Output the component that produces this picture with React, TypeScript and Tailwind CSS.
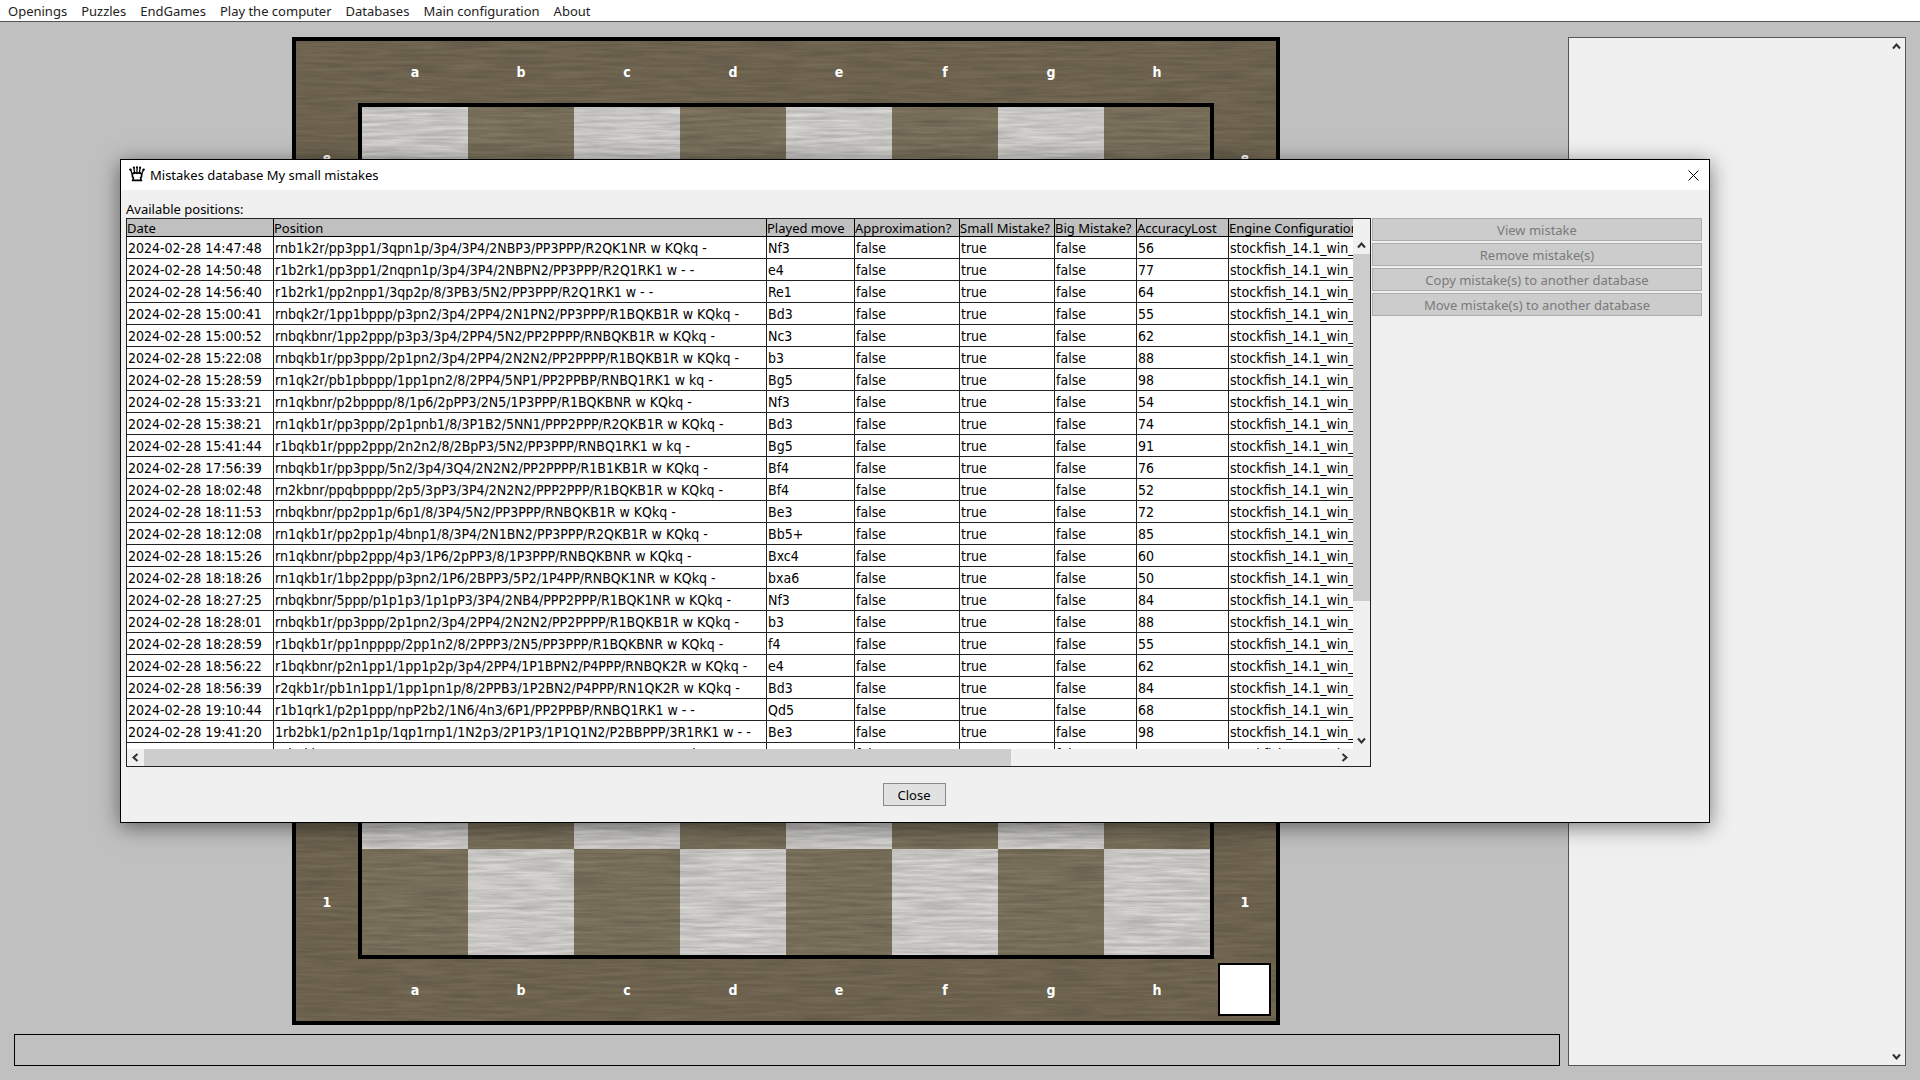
import React from 'react';

const menuItems = ['Openings', 'Puzzles', 'EndGames', 'Play the computer', 'Databases', 'Main configuration', 'About'];
const files = ['a', 'b', 'c', 'd', 'e', 'f', 'g', 'h'];
const ranks = [8, 7, 6, 5, 4, 3, 2, 1];
const actions = ['View mistake', 'Remove mistake(s)', 'Copy mistake(s) to another database', 'Move mistake(s) to another database'];

interface Mistake {
  date: string;
  position: string;
  move: string;
  lost: number;
}

const mistakes: Mistake[] = [
  { date: '2024-02-28 14:47:48', position: 'rnb1k2r/pp3pp1/3qpn1p/3p4/3P4/2NBP3/PP3PPP/R2QK1NR w KQkq -', move: 'Nf3', lost: 56 },
  { date: '2024-02-28 14:50:48', position: 'r1b2rk1/pp3pp1/2nqpn1p/3p4/3P4/2NBPN2/PP3PPP/R2Q1RK1 w - -', move: 'e4', lost: 77 },
  { date: '2024-02-28 14:56:40', position: 'r1b2rk1/pp2npp1/3qp2p/8/3PB3/5N2/PP3PPP/R2Q1RK1 w - -', move: 'Re1', lost: 64 },
  { date: '2024-02-28 15:00:41', position: 'rnbqk2r/1pp1bppp/p3pn2/3p4/2PP4/2N1PN2/PP3PPP/R1BQKB1R w KQkq -', move: 'Bd3', lost: 55 },
  { date: '2024-02-28 15:00:52', position: 'rnbqkbnr/1pp2ppp/p3p3/3p4/2PP4/5N2/PP2PPPP/RNBQKB1R w KQkq -', move: 'Nc3', lost: 62 },
  { date: '2024-02-28 15:22:08', position: 'rnbqkb1r/pp3ppp/2p1pn2/3p4/2PP4/2N2N2/PP2PPPP/R1BQKB1R w KQkq -', move: 'b3', lost: 88 },
  { date: '2024-02-28 15:28:59', position: 'rn1qk2r/pb1pbppp/1pp1pn2/8/2PP4/5NP1/PP2PPBP/RNBQ1RK1 w kq -', move: 'Bg5', lost: 98 },
  { date: '2024-02-28 15:33:21', position: 'rn1qkbnr/p2bpppp/8/1p6/2pPP3/2N5/1P3PPP/R1BQKBNR w KQkq -', move: 'Nf3', lost: 54 },
  { date: '2024-02-28 15:38:21', position: 'rn1qkb1r/pp3ppp/2p1pnb1/8/3P1B2/5NN1/PPP2PPP/R2QKB1R w KQkq -', move: 'Bd3', lost: 74 },
  { date: '2024-02-28 15:41:44', position: 'r1bqkb1r/ppp2ppp/2n2n2/8/2BpP3/5N2/PP3PPP/RNBQ1RK1 w kq -', move: 'Bg5', lost: 91 },
  { date: '2024-02-28 17:56:39', position: 'rnbqkb1r/pp3ppp/5n2/3p4/3Q4/2N2N2/PP2PPPP/R1B1KB1R w KQkq -', move: 'Bf4', lost: 76 },
  { date: '2024-02-28 18:02:48', position: 'rn2kbnr/ppqbpppp/2p5/3pP3/3P4/2N2N2/PPP2PPP/R1BQKB1R w KQkq -', move: 'Bf4', lost: 52 },
  { date: '2024-02-28 18:11:53', position: 'rnbqkbnr/pp2pp1p/6p1/8/3P4/5N2/PP3PPP/RNBQKB1R w KQkq -', move: 'Be3', lost: 72 },
  { date: '2024-02-28 18:12:08', position: 'rn1qkb1r/pp2pp1p/4bnp1/8/3P4/2N1BN2/PP3PPP/R2QKB1R w KQkq -', move: 'Bb5+', lost: 85 },
  { date: '2024-02-28 18:15:26', position: 'rn1qkbnr/pbp2ppp/4p3/1P6/2pPP3/8/1P3PPP/RNBQKBNR w KQkq -', move: 'Bxc4', lost: 60 },
  { date: '2024-02-28 18:18:26', position: 'rn1qkb1r/1bp2ppp/p3pn2/1P6/2BPP3/5P2/1P4PP/RNBQK1NR w KQkq -', move: 'bxa6', lost: 50 },
  { date: '2024-02-28 18:27:25', position: 'rnbqkbnr/5ppp/p1p1p3/1p1pP3/3P4/2NB4/PPP2PPP/R1BQK1NR w KQkq -', move: 'Nf3', lost: 84 },
  { date: '2024-02-28 18:28:01', position: 'rnbqkb1r/pp3ppp/2p1pn2/3p4/2PP4/2N2N2/PP2PPPP/R1BQKB1R w KQkq -', move: 'b3', lost: 88 },
  { date: '2024-02-28 18:28:59', position: 'r1bqkb1r/pp1npppp/2pp1n2/8/2PPP3/2N5/PP3PPP/R1BQKBNR w KQkq -', move: 'f4', lost: 55 },
  { date: '2024-02-28 18:56:22', position: 'r1bqkbnr/p2n1pp1/1pp1p2p/3p4/2PP4/1P1BPN2/P4PPP/RNBQK2R w KQkq -', move: 'e4', lost: 62 },
  { date: '2024-02-28 18:56:39', position: 'r2qkb1r/pb1n1pp1/1pp1pn1p/8/2PPB3/1P2BN2/P4PPP/RN1QK2R w KQkq -', move: 'Bd3', lost: 84 },
  { date: '2024-02-28 19:10:44', position: 'r1b1qrk1/p2p1ppp/npP2b2/1N6/4n3/6P1/PP2PPBP/RNBQ1RK1 w - -', move: 'Qd5', lost: 68 },
  { date: '2024-02-28 19:41:20', position: '1rb2bk1/p2n1p1p/1qp1rnp1/1N2p3/2P1P3/1P1Q1N2/P2BBPPP/3R1RK1 w - -', move: 'Be3', lost: 98 },
  { date: '2024-02-28 19:52:07', position: 'r1bqkb1r/pp3ppp/2n2n2/3p4/3P4/2N2N2/PP3PPP/R1BQKB1R w KQkq -', move: 'e4', lost: 57 },
];

const columns = [
  { title: 'Date', width: 'w-[147px]' },
  { title: 'Position', width: 'w-[493px]' },
  { title: 'Played move', width: 'w-[88px]' },
  { title: 'Approximation?', width: 'w-[105px]' },
  { title: 'Small Mistake?', width: 'w-[95px]' },
  { title: 'Big Mistake?', width: 'w-[82px]' },
  { title: 'AccuracyLost', width: 'w-[92px]' },
  { title: 'Engine Configuration', width: 'w-[300px]' },
];

const Chevron = ({ d }: { d: string }) => (
  <svg width="9" height="9" viewBox="0 0 9 9" fill="none" stroke="#303030" strokeWidth="2">
    <path d={d} />
  </svg>
);

const UP = 'M1 6.5 L4.5 2.5 L8 6.5';
const DOWN = 'M1 2.5 L4.5 6.5 L8 2.5';
const LEFT = 'M6.5 1 L2.5 4.5 L6.5 8';
const RIGHT = 'M2.5 1 L6.5 4.5 L2.5 8';

const QueenIcon = () => (
  <svg className="mb-0.5" width="16" height="16" viewBox="0 0 16 16">
    <g fill="none" stroke="#000" strokeWidth="1.3">
      <path d="M1.5 3.5 L3.6 9 M5 2 L5.6 8 M8 1.5 V8 M11 2 L10.4 8 M14.5 3.5 L12.4 9" />
      <path d="M3.4 8 L5.6 6.5 L8 7.5 L10.4 6.5 L12.6 8 V10.5 L11.6 12 L12.3 14.4 H3.7 L4.4 12 L3.4 10.5 Z" strokeWidth="1.6" />
    </g>
    <g fill="#000">
      <circle cx="1.4" cy="3.6" r="1.2" />
      <circle cx="4.9" cy="1.6" r="1.1" />
      <circle cx="8" cy="1.3" r="1.1" />
      <circle cx="11.1" cy="1.6" r="1.1" />
      <circle cx="14.6" cy="3.6" r="1.2" />
    </g>
  </svg>
);

// Long horizontal noise streaks, laid over the flat board colours
const WoodGrain = ({ id, seed, strength }: { id: string; seed: number; strength: number }) => (
  <svg className="absolute inset-0 w-full h-full pointer-events-none" aria-hidden="true">
    <filter id={id} x="0" y="0" width="100%" height="100%">
      <feTurbulence type="fractalNoise" baseFrequency="0.02 0.3" numOctaves="5" seed={seed} />
      <feColorMatrix values={`0 0 0 0 0  0 0 0 0 0  0 0 0 0 0  ${strength} 0 0 0 ${0.1 - strength / 2}`} />
    </filter>
    <rect width="100%" height="100%" filter={`url(#${id})`} />
  </svg>
);

const FileLabels = () => (
  <div className="flex h-[62px] justify-center">
    {files.map((f) => (
      <span key={f} className="w-[106px] flex items-center justify-center">{f}</span>
    ))}
  </div>
);

const RankLabels = () => (
  <div className="w-[62px] flex flex-col py-1">
    {ranks.map((r) => (
      <span key={r} className="flex-1 flex items-center justify-center">{r}</span>
    ))}
  </div>
);

const Board = () => (
  <div className="relative shrink-0 border-4 border-black bg-[#786d57] text-white text-[14px] leading-5 font-bold font-['DejaVu_Sans_Condensed','DejaVu_Sans',sans-serif]">
    <WoodGrain id="frame-grain" seed={4} strength={0.25} />
    <div className="relative">
      <FileLabels />
      <div className="flex">
        <RankLabels />
        <div className="relative grid grid-cols-8 border-4 border-black">
          {ranks.map((r, y) =>
            files.map((f, x) => (
              <div key={f + r} className={(x + y) % 2 === 0 ? 'size-[106px] bg-[#dcdbd8]' : 'size-[106px] bg-[#837963]'} />
            ))
          )}
          <WoodGrain id="square-grain" seed={11} strength={0.28} />
        </div>
        <RankLabels />
      </div>
      <FileLabels />
      <div className="absolute right-[5px] bottom-[5px] size-[53px] border-2 border-black bg-white" />
    </div>
  </div>
);

const MistakesTable = () => (
  <table className="w-[1402px] table-fixed border-separate border-spacing-0 text-left whitespace-nowrap">
    <thead>
      <tr className="h-[18px] bg-[#c0c0c0]">
        {columns.map((c) => (
          <th key={c.title} className={`${c.width} h-[18px] p-0 pt-px font-normal leading-4 border-r border-b border-black`}>{c.title}</th>
        ))}
      </tr>
    </thead>
    <tbody className="text-[14px] font-['DejaVu_Sans_Condensed','Noto_Sans',sans-serif]">
      {mistakes.map((m) => (
        <tr key={m.date} className="h-[22px]">
          {[m.date, m.position, m.move, 'false', 'true', 'false', m.lost, 'stockfish_14.1_win_x64_avx2'].map((value, i) => (
            <td key={i} className="h-[22px] p-0 pl-px pt-px leading-5 border-r border-b border-[#222]">{value}</td>
          ))}
        </tr>
      ))}
    </tbody>
  </table>
);

const MistakesDialog = () => (
  <div role="dialog" aria-labelledby="dialog-title" className="absolute left-[120px] right-[210px] top-[159px] border border-black bg-[#f0f0f0] shadow-[0_4px_20px_rgba(0,0,0,0.5)]">
    <div className="h-[30px] flex items-center gap-[5px] pl-2 pr-2.5 bg-white">
      <QueenIcon />
      <h1 id="dialog-title" className="flex-1 leading-5">Mistakes database My small mistakes</h1>
      <button aria-label="Close window" className="size-3 flex items-center justify-center">
        <svg width="11" height="11" viewBox="0 0 11 11" stroke="#000" strokeWidth="1"><path d="M0.5 0.5 L10.5 10.5 M10.5 0.5 L0.5 10.5" /></svg>
      </button>
    </div>
    <div className="pt-2.5 pb-4 pl-[5px] pr-[7px]">
      <p className="h-[18px] leading-[18px]">Available positions:</p>
      <div className="flex gap-px">
        <div className="flex-1 min-w-0 border border-[#222]">
          <div className="flex">
            <div className="flex-1 min-w-0 h-[530px] overflow-hidden bg-white">
              <MistakesTable />
            </div>
            <div className="w-[17px] shrink-0 pt-[18px] flex flex-col">
              <button aria-label="Scroll up" className="h-[17px] flex items-center justify-center"><Chevron d={UP} /></button>
              <div className="h-[347px] bg-[#cdcdcd]" />
              <div className="flex-1" />
              <button aria-label="Scroll down" className="h-[17px] flex items-center justify-center"><Chevron d={DOWN} /></button>
            </div>
          </div>
          <div className="h-[17px] flex pr-[17px]">
            <button aria-label="Scroll left" className="w-[17px] flex items-center justify-center"><Chevron d={LEFT} /></button>
            <div className="w-[867px] bg-[#cdcdcd]" />
            <div className="flex-1" />
            <button aria-label="Scroll right" className="w-[17px] flex items-center justify-center"><Chevron d={RIGHT} /></button>
          </div>
        </div>
        <div className="w-[330px] shrink-0 flex flex-col gap-0.5">
          {actions.map((label) => (
            <button key={label} disabled className="h-[23px] leading-5 border border-[#adadad] bg-[#cccccc] text-[#7a7a7a]">{label}</button>
          ))}
        </div>
      </div>
      <div className="flex justify-center pt-4">
        <button className="w-[63px] h-[23px] leading-5 border border-[#8a8a8a] bg-[#e1e1e1]">Close</button>
      </div>
    </div>
  </div>
);

export default function App() {
  return (
    <div className="relative min-h-screen flex flex-col bg-[#c0c0c0] text-[13px] text-black font-['Noto_Sans','DejaVu_Sans_Condensed',sans-serif]">
      <nav className="h-[22px] flex items-center gap-3.5 pl-2 bg-white border-b border-[#555] text-[#222]">
        {menuItems.map((item) => (
          <button key={item} className="leading-5">{item}</button>
        ))}
      </nav>
      <main className="flex-1 flex gap-2 px-3.5 pt-[15px] pb-3.5">
        <div className="flex-1 flex flex-col gap-[9px]">
          <div className="flex justify-center pr-0.5">
            <Board />
          </div>
          <div className="h-8 border border-black" />
        </div>
        <aside className="w-[338px] flex justify-end border border-[#555] bg-[#f0f0f0]">
          <div className="w-[17px] flex flex-col items-center justify-between py-1">
            <button aria-label="Scroll moves up"><Chevron d={UP} /></button>
            <button aria-label="Scroll moves down"><Chevron d={DOWN} /></button>
          </div>
        </aside>
      </main>
      <MistakesDialog />
    </div>
  );
}
